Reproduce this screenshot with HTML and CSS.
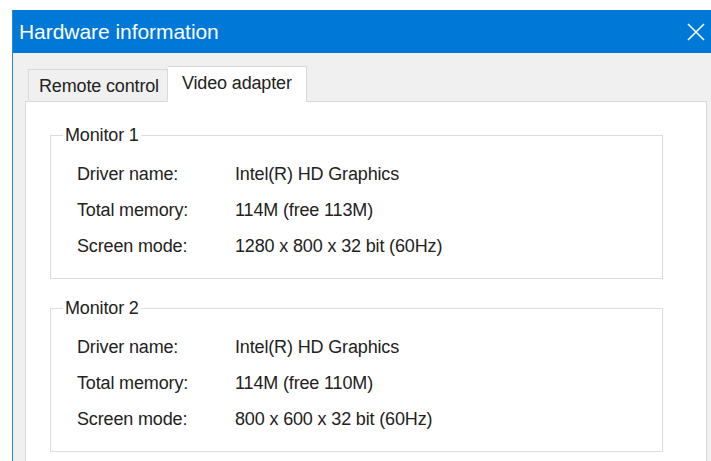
FILE: index.html
```html
<!DOCTYPE html>
<html lang="en">
<head>
<meta charset="utf-8">
<title>Hardware information</title>
<link rel="stylesheet" href="styles.css">
</head>
<body>
<div class="window">
  <div class="titlebar">
    <span class="title">Hardware information</span>
    <svg class="close" width="18" height="18" viewBox="0 0 18 18" aria-label="Close">
      <path d="M1 1 L17 17 M17 1 L1 17" stroke="#ffffff" stroke-width="1.6" fill="none"/>
    </svg>
  </div>
  <div class="client">
    <div class="tabs">
      <div class="tab">Remote control</div>
      <div class="tab active">Video adapter</div>
    </div>
    <div class="panel">
      <fieldset class="group">
        <legend>Monitor 1</legend>
        <div class="row"><span class="label">Driver name:</span><span class="value">Intel(R) HD Graphics</span></div>
        <div class="row"><span class="label">Total memory:</span><span class="value">114M (free 113M)</span></div>
        <div class="row"><span class="label">Screen mode:</span><span class="value">1280 x 800 x 32 bit (60Hz)</span></div>
      </fieldset>
      <fieldset class="group">
        <legend>Monitor 2</legend>
        <div class="row"><span class="label">Driver name:</span><span class="value">Intel(R) HD Graphics</span></div>
        <div class="row"><span class="label">Total memory:</span><span class="value">114M (free 110M)</span></div>
        <div class="row"><span class="label">Screen mode:</span><span class="value">800 x 600 x 32 bit (60Hz)</span></div>
      </fieldset>
    </div>
  </div>
</div>
</body>
</html>
```
FILE: styles.css
```css
html, body {
  margin: 0;
  height: 100%;
  background: #ffffff;
  overflow: hidden;
}

body {
  padding: 10px 0 0 12px;
  box-sizing: border-box;
  font-family: "Liberation Sans", Arial, sans-serif;
  font-size: 18px;
  letter-spacing: -0.15px;
  color: #222222;
}

.window {
  height: 100%;
  border-left: 1px solid #2b86d6;
  display: flex;
  flex-direction: column;
  background: #f0f0f0;
}

.titlebar {
  height: 43px;
  flex: none;
  background: #0078d7;
  display: flex;
  align-items: center;
  justify-content: space-between;
  padding: 0 6px 0 6px;
}

.title {
  color: #ffffff;
  font-size: 21px;
  letter-spacing: -0.05px;
  padding-top: 1px;
}

.close {
  display: block;
  margin-top: 1px;
}

.client {
  flex: 1;
  padding: 13px 4px 0 12px;
  display: flex;
  flex-direction: column;
}

.tabs {
  display: flex;
  align-items: flex-end;
  padding-left: 3px;
  height: 35px;
  flex: none;
  position: relative;
  z-index: 1;
}

.tab {
  height: 31px;
  box-sizing: border-box;
  border: 1px solid #d9d9d9;
  border-bottom: none;
  background: #f0f0f0;
  padding: 0 8px 0 10px;
  line-height: 33px;
  margin-bottom: 1px;
}

.tab.active {
  height: 36px;
  background: #ffffff;
  border-left: none;
  padding: 0 14px 0 14px;
  margin-bottom: -1px;
  line-height: 32px;
}

.panel {
  flex: 1;
  background: #ffffff;
  border: 1px solid #d9d9d9;
  border-bottom: none;
  padding: 23px 43px 0 24px;
}

.group {
  margin: 0 0 19px 0;
  border: 1px solid #dcdcdc;
  padding: 10px 10px 14px 26px;
  min-width: 0;
}

.group legend {
  margin-left: -14px;
  padding: 0 2px;
}

.row {
  display: flex;
  height: 36px;
  align-items: center;
}

.label {
  width: 158px;
  flex: none;
}
```
